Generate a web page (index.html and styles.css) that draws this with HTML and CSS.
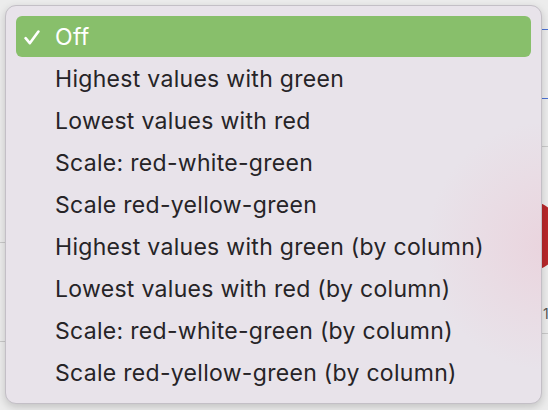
FILE: index.html
```html
<!DOCTYPE html>
<html>
<head>
<meta charset="utf-8">
<link rel="stylesheet" href="styles.css">
</head>
<body>
<div class="stage">
  <div class="bg-line blue l1"></div>
  <div class="bg-line blue l2"></div>
  <div class="bg-line gray r1"></div>
  <div class="bg-line gray r2"></div>
  <div class="bg-line gray r3"></div>
  <div class="bg-line gray left1"></div>
  <div class="bg-line gray left2"></div>
  <div class="red-dot"></div>
  <div class="bg-num">1</div>

  <div class="menu">
    <ul class="items">
      <li class="item selected">
        <svg class="check" viewBox="0 0 16 15" width="16" height="15"><path d="M1.6 8.2 L5.8 13.2 L14.4 1.6" fill="none" stroke="#fff" stroke-width="2.6" stroke-linecap="round" stroke-linejoin="round"/></svg>
        <span>Off</span>
      </li>
      <li class="item"><span>Highest values with green</span></li>
      <li class="item"><span>Lowest values with red</span></li>
      <li class="item"><span>Scale: red-white-green</span></li>
      <li class="item"><span>Scale red-yellow-green</span></li>
      <li class="item"><span>Highest values with green (by column)</span></li>
      <li class="item"><span>Lowest values with red (by column)</span></li>
      <li class="item"><span>Scale: red-white-green (by column)</span></li>
      <li class="item"><span>Scale red-yellow-green (by column)</span></li>
    </ul>
  </div>
</div>
</body>
</html>
```

FILE: styles.css
```css
* { box-sizing: border-box; }
html, body { margin: 0; padding: 0; }
body {
  width: 548px;
  height: 410px;
  overflow: hidden;
  background: #ececec;
  font-family: Inter, "Noto Sans", "Liberation Sans", sans-serif;
}
.stage {
  position: relative;
  width: 548px;
  height: 410px;
  padding: 5px 6px 6px 5px;
}
.bg-line { position: absolute; height: 1px; }
.bg-line.blue { background: #4a72d6; right: 0; width: 8px; }
.bg-line.gray { background: #c9c9c9; }
.l1 { top: 29px; }
.l2 { top: 98px; }
.r1 { top: 146px; right: 0; width: 8px; }
.r2 { top: 211px; right: 0; width: 8px; }
.r3 { top: 333px; right: 0; width: 8px; }
.left1 { top: 242px; left: 0; width: 6px; }
.left2 { top: 341px; left: 0; width: 6px; }
.red-dot {
  position: absolute;
  left: 490px;
  top: 200px;
  width: 72px;
  height: 72px;
  border-radius: 50%;
  background: #b8282b;
}
.bg-num {
  position: absolute;
  left: 543px;
  top: 305px;
  font-size: 14px;
  color: #555;
}
.menu {
  position: relative;
  width: 537px;
  height: 399px;
  border: 1px solid #c3bfc6;
  border-radius: 11px;
  background:
    radial-gradient(circle at 545px 240px, rgba(234, 210, 220, 0.9) 0, rgba(234, 214, 223, 0.6) 60px, rgba(232, 227, 234, 0) 125px),
    #e8e3ea;
  box-shadow: 0 3px 8px rgba(0, 0, 0, 0.18);
  padding: 10px;
}
.items {
  list-style: none;
  margin: 0;
  padding: 0;
  display: flex;
  flex-direction: column;
}
.item {
  position: relative;
  height: 42px;
  display: flex;
  align-items: center;
  padding-left: 39px;
  font-size: 23px;
  letter-spacing: 0.3px;
  color: #262427;
  border-radius: 6px;
}
.item.selected {
  height: 41px;
  margin-bottom: 1px;
  background: #88bf6b;
  color: #ffffff;
}
.check {
  position: absolute;
  left: 8px;
  top: 14px;
}
```
